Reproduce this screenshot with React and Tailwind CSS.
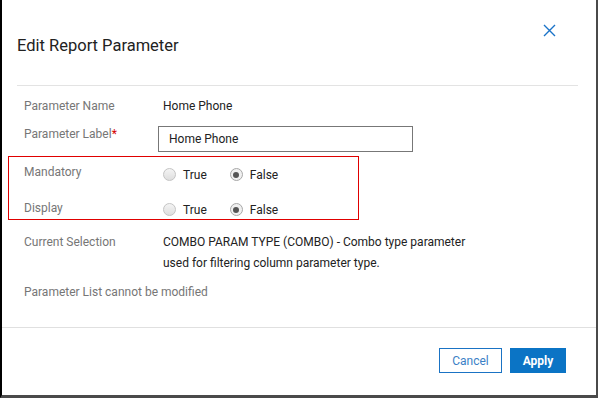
export default function App() {
  const Radio = ({ checked, label }) => (
    <label className="flex items-center">
      <span
        className={
          'w-[13px] h-[13px] rounded-full border flex items-center justify-center ' +
          (checked ? 'border-[#a8a8a8] bg-[#f0f0f0]' : 'border-[#c4c4c4] bg-gradient-to-b from-[#f4f4f4] to-[#dedede]')
        }
      >
        {checked && <span className="w-[6px] h-[6px] rounded-full bg-[#555]"></span>}
      </span>
      <span className="ml-[7px] text-[#222]">{label}</span>
    </label>
  );

  return (
    <div className="w-[598px] h-[398px] bg-white border-l-2 border-l-black border-r-2 border-r-[#4a4a4a] border-b-[3px] border-b-[#4a4a4a] font-['Roboto',sans-serif] text-[12px] overflow-hidden">
      {/* Header */}
      <div className="h-[85px] flex justify-between items-start pl-[15px] pr-[40px]">
        <h2 className="mt-[36px] text-[16.5px] leading-[20px] text-[#222]">Edit Report Parameter</h2>
        <button className="mt-[24px] w-[13px] h-[13px]">
          <svg width="13" height="13" viewBox="0 0 13 13">
            <path d="M1 1L12 12M12 1L1 12" stroke="#1a73c8" strokeWidth="1.4" fill="none" />
          </svg>
        </button>
      </div>
      <div className="h-px bg-[#e3e3e3] ml-[15px] mr-[18px]"></div>

      {/* Body */}
      <div className="flex items-center h-[20px] mt-[10px] pl-[22px] leading-[20px]">
        <span className="w-[139px] text-[#767676]">Parameter Name</span>
        <span className="text-[#222]">Home Phone</span>
      </div>
      <div className="flex items-start h-[28px] mt-[8px] pl-[22px] leading-[20px]">
        <span className="w-[134px] text-[#767676]">
          Parameter Label<span className="text-[#d40000]">*</span>
        </span>
        <div className="mt-[2px] w-[255px] h-[26px] border border-[#777] flex items-center pl-[10px] text-[#222]">
          Home Phone
        </div>
      </div>

      <div className="mt-[4px] ml-[6px] w-[351px] h-[64px] border border-[#e00000] pl-[15px] pt-[5px] leading-[20px]">
        <div className="flex items-center h-[20px]">
          <span className="w-[139px] text-[#767676]">Mandatory</span>
          <div className="flex items-center gap-[23px] mt-[5px]">
            <Radio label="True" />
            <Radio checked label="False" />
          </div>
        </div>
        <div className="flex items-center h-[20px] mt-[16px]">
          <span className="w-[139px] text-[#767676]">Display</span>
          <div className="flex items-center gap-[23px] mt-[3px]">
            <Radio label="True" />
            <Radio checked label="False" />
          </div>
        </div>
      </div>

      <div className="flex items-start mt-[12px] pl-[22px] leading-[21px]">
        <span className="w-[139px] text-[#767676]">Current Selection</span>
        <p className="w-[320px] text-[#222]">
          COMBO PARAM TYPE (COMBO) - Combo type parameter used for filtering column parameter type.
        </p>
      </div>
      <div className="mt-[8px] pl-[22px] leading-[20px] text-[#767676]">Parameter List cannot be modified</div>

      {/* Footer */}
      <div className="h-px bg-[#e0e0e0] mt-[25px]"></div>
      <div className="flex justify-end gap-[8px] mt-[20px] pr-[30px]">
        <button className="w-[63px] h-[25px] border border-[#1a73c4] text-[#3b7fc6] text-[12px] bg-white">Cancel</button>
        <button className="w-[56px] h-[25px] bg-[#0b74c5] text-white font-bold text-[12px]">Apply</button>
      </div>
    </div>
  );
}
